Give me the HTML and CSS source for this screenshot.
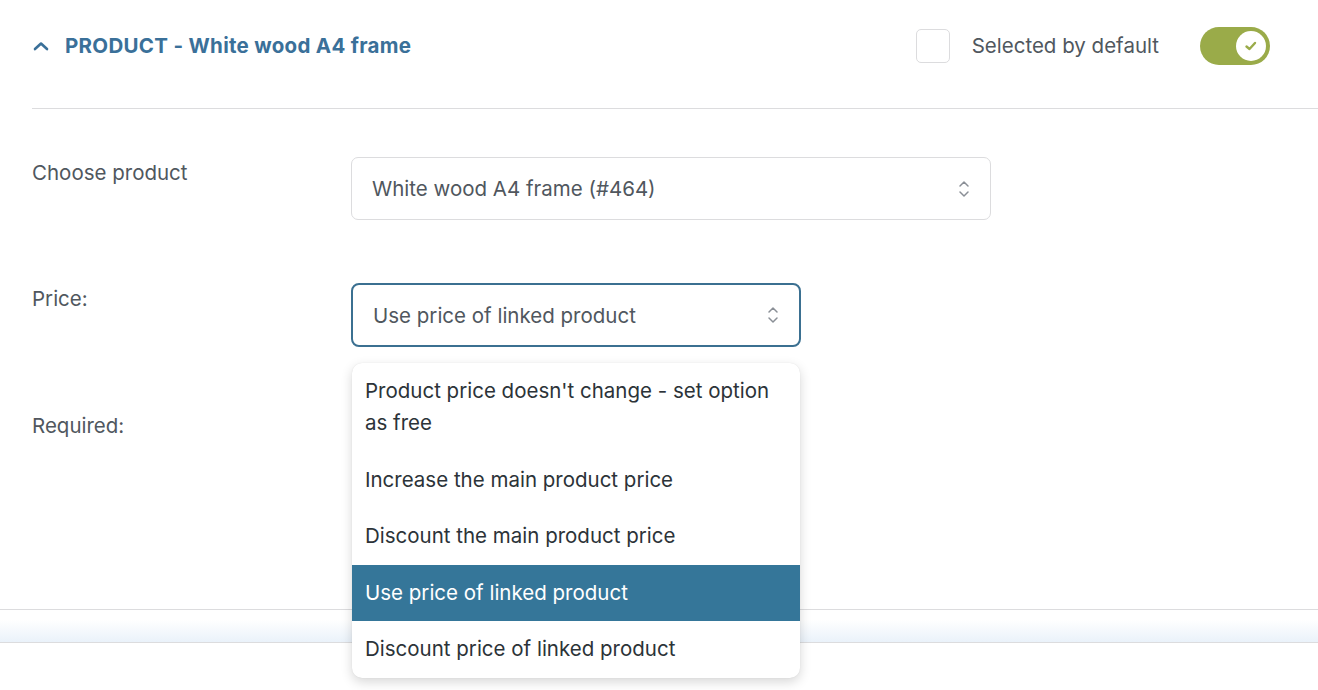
FILE: index.html
```html
<!doctype html>
<html>
<head>
<meta charset="utf-8">
<title>Product option</title>
<link rel="stylesheet" href="styles.css">
</head>
<body>
<div id="panel">
  <div class="option-head">
    <svg class="collapse" width="16" height="10" viewBox="0 0 16 10"><polyline points="2,8 8,2.5 14,8" fill="none" stroke="#3a7099" stroke-width="2.6" stroke-linecap="round" stroke-linejoin="round"/></svg>
    <h2 class="option-title">PRODUCT - White wood A4 frame</h2>
    <span class="check-box"></span>
    <span class="check-label">Selected by default</span>
    <span class="toggle">
      <span class="knob">
        <svg width="14" height="12" viewBox="0 0 14 12"><polyline points="2.5,6.5 5.5,9 11,3" fill="none" stroke="#9aab49" stroke-width="2.4" stroke-linecap="round" stroke-linejoin="round"/></svg>
      </span>
    </span>
  </div>

  <div class="fields">
    <label class="field-label">Choose product</label>
    <div class="select wide">
      White wood A4 frame (#464)
      <svg class="arrows" width="12" height="18" viewBox="0 0 12 18"><polyline points="2,6 6,2 10,6" fill="none" stroke="#8a8f96" stroke-width="1.5" stroke-linecap="round" stroke-linejoin="round"/><polyline points="2,12 6,16 10,12" fill="none" stroke="#8a8f96" stroke-width="1.5" stroke-linecap="round" stroke-linejoin="round"/></svg>
    </div>

    <label class="field-label">Price:</label>
    <div class="select-wrap">
      <div class="select focused">
        Use price of linked product
        <svg class="arrows" width="12" height="18" viewBox="0 0 12 18"><polyline points="2,6 6,2 10,6" fill="none" stroke="#8a8f96" stroke-width="1.5" stroke-linecap="round" stroke-linejoin="round"/><polyline points="2,12 6,16 10,12" fill="none" stroke="#8a8f96" stroke-width="1.5" stroke-linecap="round" stroke-linejoin="round"/></svg>
      </div>
      <ul class="menu">
        <li>Product price doesn't change - set option as free</li>
        <li>Increase the main product price</li>
        <li>Discount the main product price</li>
        <li class="active">Use price of linked product</li>
        <li>Discount price of linked product</li>
      </ul>
    </div>

    <label class="field-label">Required:</label>
    <div></div>
  </div>
</div>
<div id="band"></div>
<div id="below"></div>
</body>
</html>
```

FILE: styles.css
```css
html, body { margin:0; padding:0; background:#fff; }
body {
font-family:Inter, "Noto Sans", sans-serif;
font-size:20.5px;
color:#50575e;
min-height:690px;
}
ul { margin:0; padding:0; list-style:none; }

#panel { height:610px; box-sizing:border-box; padding-left:32px; border-bottom:1px solid #dcdcde; }

.option-head {
display:flex; align-items:center;
height:109px; box-sizing:border-box; padding:0 48px 17px 1px;
border-bottom:1px solid #dcdcde;
}
.collapse { margin-right:16px; }
.option-title { margin:0; flex:1; font-size:20.5px; font-weight:700; color:#3a7099; letter-spacing:0.3px; }
.check-box { width:32px; height:32px; border:1px solid #dcdcde; border-radius:5px; margin-right:22px; }
.check-label { margin-right:41px; }
.toggle {
display:flex; align-items:center; justify-content:flex-end;
width:70px; height:38px; box-sizing:border-box; padding-right:4px;
border-radius:19px; background:#9aab49;
}
.knob {
display:flex; align-items:center; justify-content:center;
width:30px; height:30px; border-radius:50%; background:#fff;
}

.fields {
display:grid; grid-template-columns:319px 640px;
row-gap:63px; padding-top:48px;
}
.field-label { padding-top:3px; }
.select {
display:flex; align-items:center; justify-content:space-between;
height:63px; box-sizing:border-box; padding:0 20px 0 20px;
border:1px solid #dcdcde; border-radius:7px; color:#50575e;
}
.select-wrap { position:relative; width:450px; }
.select.focused { height:64px; border:2px solid #3b7091; border-radius:8px; padding-left:20px; }
.menu {
position:absolute; z-index:5; left:1px; right:1px; top:80px;
background:#fff; border-radius:10px; overflow:hidden;
box-shadow:0 4px 12px rgba(0,0,0,0.16), 0 0 1px rgba(0,0,0,0.12);
color:#2c3338;
}
.menu li { padding:12.25px 13px; line-height:32px; }
.menu li.active { background:#357699; color:#fff; }

#band { height:32px; background:linear-gradient(#fff 30%, #eaf2fa); border-bottom:1px solid #dcdcde; }
#below { height:47px; }
```
